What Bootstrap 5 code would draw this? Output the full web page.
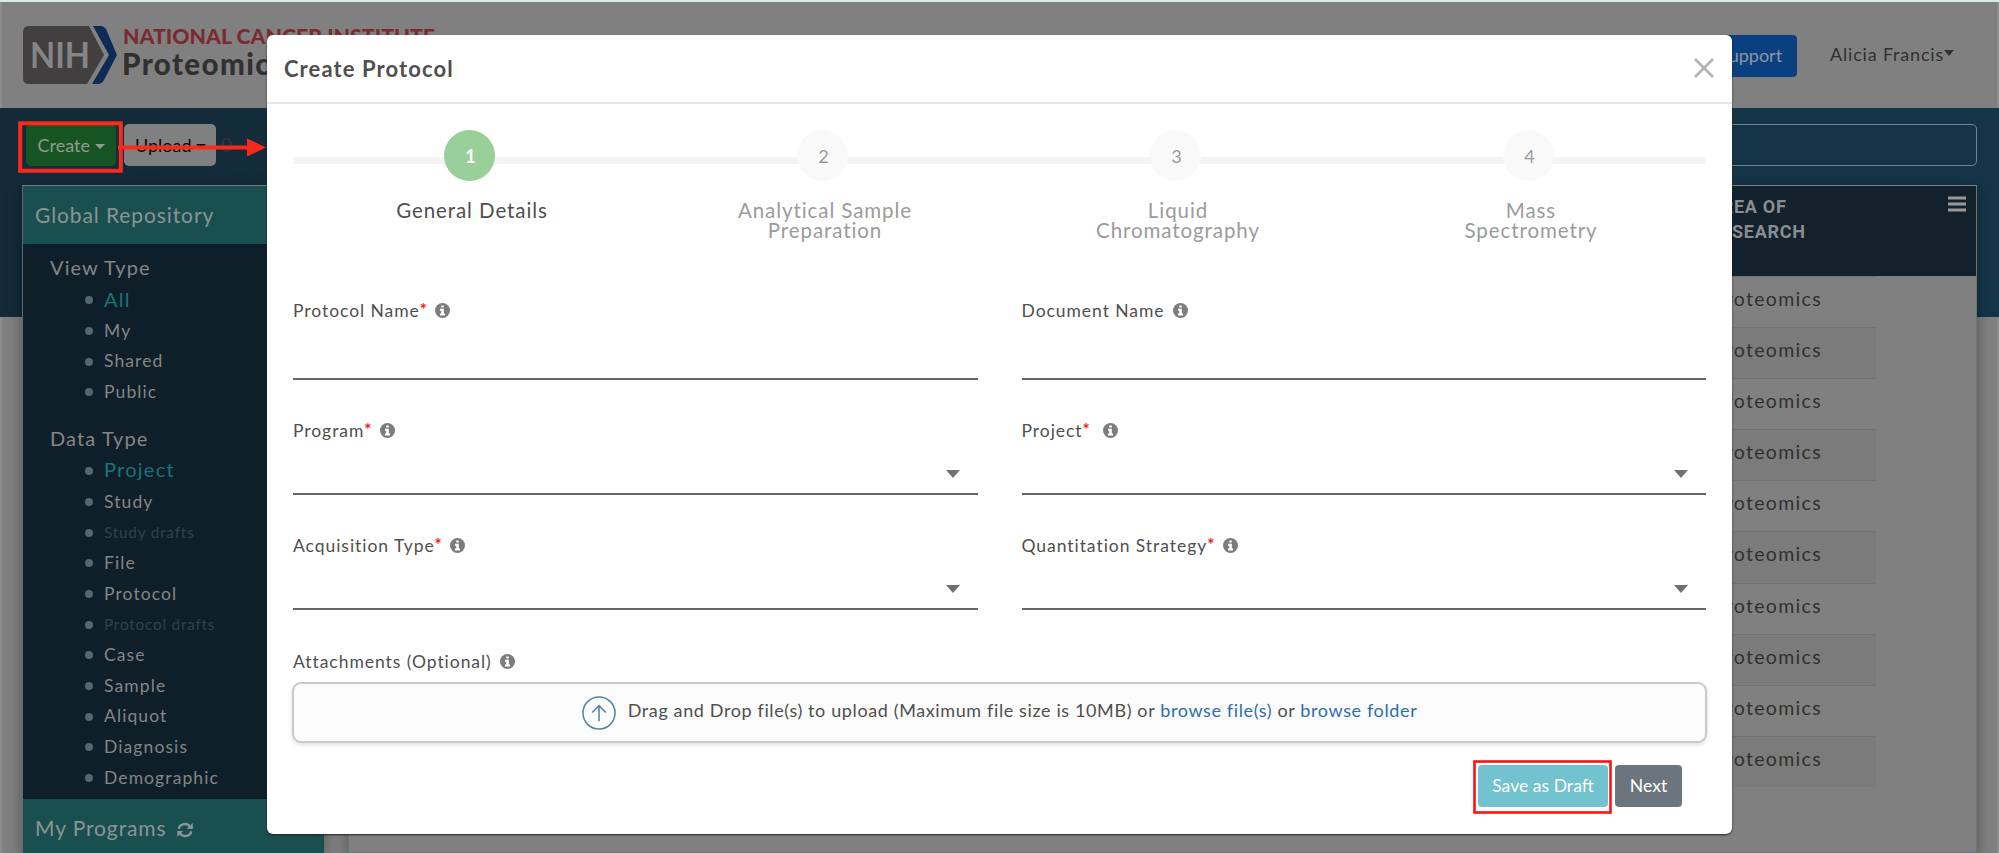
<!DOCTYPE html>
<html lang="en">
<head>
<meta charset="utf-8">
<meta name="viewport" content="width=device-width, initial-scale=1">
<title>Create Protocol</title>
<link href="https://cdn.jsdelivr.net/npm/bootstrap@5.3.0/dist/css/bootstrap.min.css" rel="stylesheet">
<style>
body{font-family:Lato,sans-serif;background:#808080;color:#303030;height:853px;overflow:hidden;letter-spacing:1.2px;font-size:18px;line-height:1.2}
.page{height:853px;overflow:hidden;position:relative;border-top:2px solid #d6ecea;padding-top:1px;box-shadow:inset 2px 0 #8c8c8c,inset -2px 0 #8c8c8c}
.topbar{height:105px;padding:23px 45px 0 22px}
.support{background:#0a4080;color:#8f969e;height:42px;width:130px;font-size:18px;letter-spacing:0;border-radius:4px;margin-top:9px;padding:0 15px 2px 0;text-align:right;line-height:40px}
.user{margin:18px 0 0 33px;font-size:18px;letter-spacing:.8px}
.tri{display:inline-block;border:5px solid transparent;border-top-color:currentColor;border-bottom:0;vertical-align:3px;letter-spacing:0}
.user .tri{vertical-align:5px;border-top-width:6px}
.stage{background:linear-gradient(90deg,#132a38,#143547 85%) 0 0/100% 209px no-repeat;height:745px;padding:16px 22px 0 22px}
.tools{height:42px;padding-left:4px}
.tools .tbtn{height:42px;border-radius:5px;font-size:18px;letter-spacing:0;line-height:42px;text-align:center}
.create{width:90px;background:#175423;color:#8f9d91}
.upload{width:92px;background:#808080;color:#080808;margin-left:8px;padding-left:1px}
.cnt{color:#33343a;margin-left:5px;font-size:19px}
.search{border:1px solid #77838a;border-radius:5px;margin-left:36px}
.panes{margin-top:19px;height:668px;gap:24px}
.side{width:302px;background:#0f1f29;border-left:1.5px solid #626a6d;border-top:1px solid #747b7c;box-shadow:0 5px 14px rgba(0,0,0,.35);color:#858585}
.sec{background:#1a4f4f;color:#8b9494;font-size:21px;letter-spacing:.9px;padding-left:12px;height:58px;line-height:58px}
.grp{font-size:20px;letter-spacing:1.1px;height:31px;line-height:31px;padding-left:27px;margin-top:8px}
.grp.second{margin-top:15px}
.side ul{list-style:none;margin:0;padding:2px 0 0 62px}
.side li{height:30.71px;line-height:30.71px;display:flex;align-items:center;font-size:17.5px;letter-spacing:1.1px}
.side li::before{content:"";width:8px;height:8px;border-radius:50%;background:#566570;margin-right:11px}
.side li.on{color:#18737a;font-size:20px}
.side li.off{color:#353f47;font-size:15.3px;letter-spacing:.8px}
.side li.on span{margin-top:-3px}
.side .grp+ul li.on{letter-spacing:1.25px}
.tbl{background:#808080;border:1px solid #6d7476;border-top:1px solid #788082;box-shadow:0 5px 14px rgba(0,0,0,.35)}
.thd{background:#12212b;height:90px;color:#898d90;font:bold 18px/25px "Liberation Sans Narrow",Roboto,sans-serif;letter-spacing:.7px;padding:8px 10px 0 1360px}
.trow{height:51.1px;line-height:43px;padding-left:1364px;width:1527px;border-top:1.5px solid #727272;font-size:19.5px;letter-spacing:1.3px;color:#303030}
.trow:nth-child(odd){background:#7b7b7b}
.dlg{position:absolute;left:267px;top:33px;width:1465px;height:799px;background:#fff;border-radius:6px;box-shadow:0 1px 2px #222;color:#4f4f4f}
.dhead{height:69px;border-bottom:2px solid #e3e8ec;padding:2px 18px 0 17px;font-weight:700;font-size:22px;letter-spacing:1.1px}
.dbody{padding:0 26px}
.steps{background:linear-gradient(#f4f4f4,#f4f4f4) 0 53px/100% 7px no-repeat;height:194px;padding-top:26px}
.stepcol{width:353px;text-align:center;color:#9b9b9b;font-size:20.5px;line-height:20.5px;letter-spacing:.92px}
.dot{width:51px;height:51px;border-radius:50%;background:rgba(249,249,249,.97);font-size:18px;line-height:53px;letter-spacing:0;margin:0 auto 18.5px;padding-left:2px}
.stepcol.cur{color:#4f4f4f}
.cur .dot{background:#99cf99;color:#fff;font-weight:700}
.stepcol div:last-child{padding-left:5px}
.fld{width:684.5px;border-bottom:2px solid #666;font-size:17.5px;letter-spacing:.95px;line-height:25px}
.star{color:#f21818;font-size:17px;font-weight:700;vertical-align:1px;line-height:0;letter-spacing:0}
.inf{width:15px;height:15px;margin-left:3px;vertical-align:-1px}
.pick{width:0;height:0;border:7px solid transparent;border-top:8px solid #707070;border-bottom:0;margin:27px 18px 0 auto}
.drop{height:61px;border:2px solid #cacaca;border-radius:9px;background:#fcfcfc;box-shadow:0 2px 4px rgba(0,0,0,.12);margin:0 -1px;font-size:18px;letter-spacing:.62px;color:#4f4f4f}
.drop a{color:#2a6fae;text-decoration:none}
.act{height:42px;border-radius:4px;color:#fff;font-size:17.6px;letter-spacing:0;line-height:42px;text-align:center}
.marks{position:absolute;left:0;top:-2px;pointer-events:none}
</style>
</head>
<body>
<svg width="0" height="0" class="position-absolute"><symbol id="info" viewBox="0 0 16 16"><circle cx="8" cy="8" r="8" fill="#7c7c7c"/><path fill="#fff" d="M6.6 2.6h2.8v2.3H6.6zM5.3 6.2h4.1v5.1h1.3v2H5.3v-2h1.3V8.2H5.3z"/></symbol></svg>
<div class="page">
  <header class="topbar d-flex align-items-start">
    <svg width="420" height="60" class="me-auto">
      <path d="M7 0H67L82 29L65 58H7Q1 58 1 52V6Q1 0 7 0Z" fill="#423f41"/>
      <path d="M71 0H79Q82 0 84 3L95 29L82 54Q80 58 76 58H70L87 29Z" fill="#0d2b56"/>
      <text x="8" y="42" font-size="36" font-weight="700" fill="#858585" textLength="60" lengthAdjust="spacingAndGlyphs" letter-spacing="0">NIH</text>
      <text x="101" y="18" font-size="21.5" font-weight="900" fill="#7b2b2f" textLength="312" lengthAdjust="spacingAndGlyphs" letter-spacing="0">NATIONAL CANCER INSTITUTE</text>
      <text x="100" y="49" font-size="29.5" font-weight="900" fill="#303030" textLength="162" letter-spacing="0">Proteomics</text>
    </svg>
    <div class="support">Support</div>
    <div class="user">Alicia Francis<span class="tri"></span></div>
  </header>
  <main class="stage">
    <div class="tools d-flex align-items-center">
      <div class="tbtn create">Create <span class="tri"></span></div>
      <div class="tbtn upload">Upload <span class="tri"></span></div>
      <span class="cnt">0</span>
      <div class="search flex-grow-1 h-100"></div>
    </div>
    <div class="panes d-flex">
      <aside class="side flex-shrink-0">
        <div class="sec">Global Repository</div>
        <div class="grp">View Type</div>
        <ul><li class="on"><span>All</span></li><li>My</li><li>Shared</li><li>Public</li></ul>
        <div class="grp second">Data Type</div>
        <ul><li class="on"><span>Project</span></li><li>Study</li><li class="off">Study drafts</li><li>File</li><li>Protocol</li><li class="off">Protocol drafts</li><li>Case</li><li>Sample</li><li>Aliquot</li><li>Diagnosis</li><li>Demographic</li></ul>
        <div class="sec" style="margin-top:5px">My Programs
          <svg width="16" height="16" viewBox="0 0 16 16" class="ms-1" style="vertical-align:-2px" fill="none" stroke="#8b9494" stroke-width="2.4"><path d="M1.8 6.8C2.7 1.5 10.3.3 13.2 4.9M14.2 9.2C13.3 14.5 5.7 15.7 2.8 11.1"/><path d="M15.8 1v6h-6zM.2 15V9h6z" fill="#8b9494" stroke="none"/></svg></div>
      </aside>
      <section class="tbl flex-grow-1">
        <div class="thd d-flex justify-content-between"><div>AREA OF<br>RESEARCH</div>
          <svg width="18" height="16" style="margin-top:2px"><path d="M0 2h18M0 8h18M0 14h18" stroke="#999" stroke-width="3"/></svg></div>
        <div class="trow">Proteomics</div><div class="trow">Proteomics</div><div class="trow">Proteomics</div><div class="trow">Proteomics</div><div class="trow">Proteomics</div><div class="trow">Proteomics</div><div class="trow">Proteomics</div><div class="trow">Proteomics</div><div class="trow">Proteomics</div><div class="trow">Proteomics</div>
      </section>
    </div>
  </main>

  <div class="dlg" role="dialog">
    <div class="dhead d-flex align-items-center justify-content-between">Create Protocol
      <svg width="20" height="20" class="mb-1"><path d="M1 1L19 19M19 1L1 19" stroke="#b5b5b5" stroke-width="2.8"/></svg></div>
    <div class="dbody">
      <div class="steps d-flex">
        <div class="stepcol cur"><div class="dot">1</div><div>General Details</div></div>
        <div class="stepcol"><div class="dot">2</div><div>Analytical Sample<br>Preparation</div></div>
        <div class="stepcol"><div class="dot">3</div><div>Liquid<br>Chromatography</div></div>
        <div class="stepcol"><div class="dot">4</div><div>Mass<br>Spectrometry</div></div>
      </div>
      <div class="d-flex justify-content-between">
        <div class="fld" style="height:82px">Protocol Name<span class="star">*</span> <svg class="inf"><use href="#info"/></svg></div>
        <div class="fld" style="height:82px">Document Name <svg class="inf"><use href="#info"/></svg></div>
      </div>
      <div class="d-flex justify-content-between" style="margin-top:38px">
        <div class="fld" style="height:77px">Program<span class="star">*</span> <svg class="inf"><use href="#info"/></svg><div class="pick"></div></div>
        <div class="fld" style="height:77px">Project<span class="star">*</span> <svg class="inf ms-2"><use href="#info"/></svg><div class="pick"></div></div>
      </div>
      <div class="d-flex justify-content-between" style="margin-top:38px">
        <div class="fld" style="height:77px">Acquisition Type<span class="star">*</span> <svg class="inf"><use href="#info"/></svg><div class="pick"></div></div>
        <div class="fld" style="height:77px">Quantitation Strategy<span class="star">*</span> <svg class="inf"><use href="#info"/></svg><div class="pick"></div></div>
      </div>
      <div class="fld border-0" style="height:33px;margin-top:39px">Attachments (Optional) <svg class="inf"><use href="#info"/></svg></div>
      <div class="drop d-flex align-items-center justify-content-center">
        <svg width="34" height="34" viewBox="0 0 35 35" fill="none" stroke="#4f87a6" stroke-width="1.6" class="me-2"><circle cx="17.5" cy="17.5" r="16.5"/><path d="M17.5 26V10M10.5 17L17.5 10L24.5 17"/></svg>
        <div class="ms-1 pb-1">Drag and Drop file(s) to upload (Maximum file size is 10MB) or <a href="#">browse file(s)</a> or <a href="#">browse folder</a></div>
      </div>
      <div class="d-flex justify-content-end" style="margin-top:22px;padding-right:24px;gap:7px">
        <div class="act" style="width:130px;background:#72c2cf">Save as Draft</div>
        <div class="act" style="width:67px;background:#6c757d">Next</div>
      </div>
    </div>
  </div>
  <svg class="marks" width="1999" height="853">
    <g fill="none" stroke="#f92a1c"><rect x="20.2" y="123.3" width="100.6" height="47.5" stroke-width="4"/><path d="M118 147.5H250" stroke-width="4"/><rect x="1474.5" y="761.5" width="136" height="51" stroke="#fb1313" stroke-width="2.6"/></g>
    <path d="M247 138.5L266 147.5L247 156.5Z" fill="#f92a1c"/>
  </svg>
</div>
<script src="https://cdn.jsdelivr.net/npm/bootstrap@5.3.0/dist/js/bootstrap.bundle.min.js"></script>
</body>
</html>
